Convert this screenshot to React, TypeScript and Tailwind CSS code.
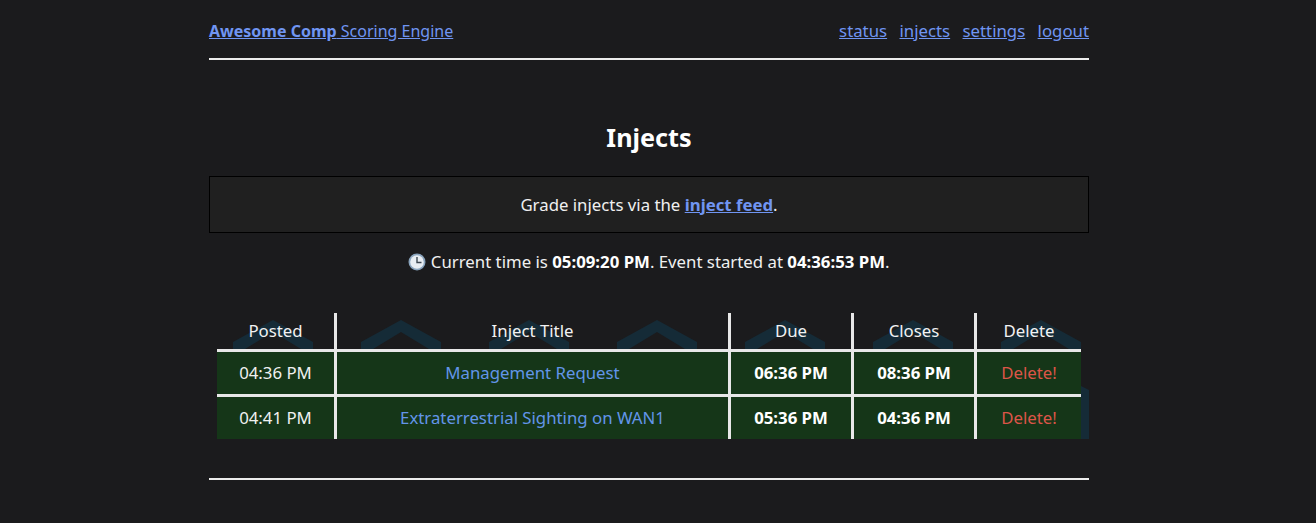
import React from 'react';

const injects = [
  { posted: '04:36 PM', title: 'Management Request', due: '06:36 PM', closes: '08:36 PM' },
  { posted: '04:41 PM', title: 'Extraterrestrial Sighting on WAN1', due: '05:36 PM', closes: '04:36 PM' },
];

const hexPeaks = [64, 192, 320, 448, 576, 704, 832];

// faint hexagon pattern behind the table header
function HexBackground() {
  return (
    <svg className="absolute left-0 top-0" width="880" height="126" viewBox="0 0 880 126">
      {hexPeaks.map(x => (
        <path
          key={x}
          d={`M${x - 40} 36 L${x - 40} 29 L${x} 7 L${x + 40} 29 L${x + 40} 36 L${x + 28} 36 L${x} 19 L${x - 28} 36 Z`}
          fill="#152b37"
        />
      ))}
      <path d="M872 73 L880 77 L880 126 L872 126 Z" fill="#152b37" />
    </svg>
  );
}

function ClockIcon() {
  return (
    <svg width="18" height="18" viewBox="0 0 18 18" className="inline-block align-[-3px]">
      <circle cx="9" cy="9" r="8.5" fill="#8aa4bd" />
      <circle cx="9" cy="9" r="6.8" fill="#e8edf2" />
      <path d="M9 4 L9 9.5 L13.5 9.5" fill="none" stroke="#3c4650" strokeWidth="1.4" />
    </svg>
  );
}

export default function App() {
  const thClass = 'h-[39px] border-b-[3px] border-[#e8e8e8] font-normal text-[#f2f2f2] p-0 text-center';
  const tdClass = 'h-[42px] bg-[#153618] text-center p-0';

  return (
    <div className="h-[523px] overflow-hidden bg-[#1b1b1d] text-[16.8px] leading-6 text-[#f0f0f0] font-['Noto_Sans',sans-serif]">
      <div className="w-[1298px] flex flex-col items-center">
        <div className="w-[880px]">
          {/* Header */}
          <header className="flex items-center justify-between pt-[19px] pb-[15px] border-b-2 border-[#ececec]">
            <a href="#" className="text-[16px] text-[#7095f2] underline">
              <b>Awesome Comp</b> Scoring Engine
            </a>
            <nav className="flex gap-[12.4px]">
              <a href="#" className="text-[#7095f2] underline">status</a>
              <a href="#" className="text-[#7095f2] underline">injects</a>
              <a href="#" className="text-[#7095f2] underline">settings</a>
              <a href="#" className="text-[#7095f2] underline">logout</a>
            </nav>
          </header>

          <h1 className="mt-[61px] text-center text-[25.2px] leading-8 font-bold text-white">Injects</h1>

          <div className="mt-[23px] h-[57px] flex items-center justify-center border border-black bg-[#202020]">
            <span>
              Grade injects via the{' '}
              <a href="#" className="text-[#7095f2] underline font-bold">inject feed</a>.
            </span>
          </div>

          <p className="mt-[17px] text-center">
            <ClockIcon /> Current time is <b className="text-white">05:09:20 PM</b>. Event started at{' '}
            <b className="text-white">04:36:53 PM</b>.
          </p>

          {/* Table */}
          <div className="relative mt-[39px] h-[126px]">
            <HexBackground />
            <table className="relative ml-2 w-[864px] table-fixed border-separate border-spacing-0">
              <colgroup>
                <col className="w-[120px]" />
                <col className="w-[394px]" />
                <col className="w-[123px]" />
                <col className="w-[123px]" />
                <col className="w-[104px]" />
              </colgroup>
              <thead>
                <tr>
                  <th className={`${thClass} border-r-[3px]`}>Posted</th>
                  <th className={`${thClass} border-r-[3px]`}>Inject Title</th>
                  <th className={`${thClass} border-r-[3px]`}>Due</th>
                  <th className={`${thClass} border-r-[3px]`}>Closes</th>
                  <th className={thClass}>Delete</th>
                </tr>
              </thead>
              <tbody>
                {injects.map((row, i) => {
                  const sep = i === 0 ? 'h-[45px] border-b-[3px] border-[#e8e8e8]' : '';
                  return (
                    <tr key={row.title}>
                      <td className={`${tdClass} ${sep} border-r-[3px] border-[#e8e8e8]`}>{row.posted}</td>
                      <td className={`${tdClass} ${sep} border-r-[3px] border-[#e8e8e8]`}>
                        <a href="#" className="text-[#6395e8]">{row.title}</a>
                      </td>
                      <td className={`${tdClass} ${sep} border-r-[3px] border-[#e8e8e8] font-bold text-white`}>{row.due}</td>
                      <td className={`${tdClass} ${sep} border-r-[3px] border-[#e8e8e8] font-bold text-white`}>{row.closes}</td>
                      <td className={`${tdClass} ${sep}`}>
                        <a href="#" className="text-[#dc5548]">Delete!</a>
                      </td>
                    </tr>
                  );
                })}
              </tbody>
            </table>
          </div>

          <hr className="mt-[39px] border-t-2 border-[#ececec]" />
        </div>
      </div>
    </div>
  );
}
